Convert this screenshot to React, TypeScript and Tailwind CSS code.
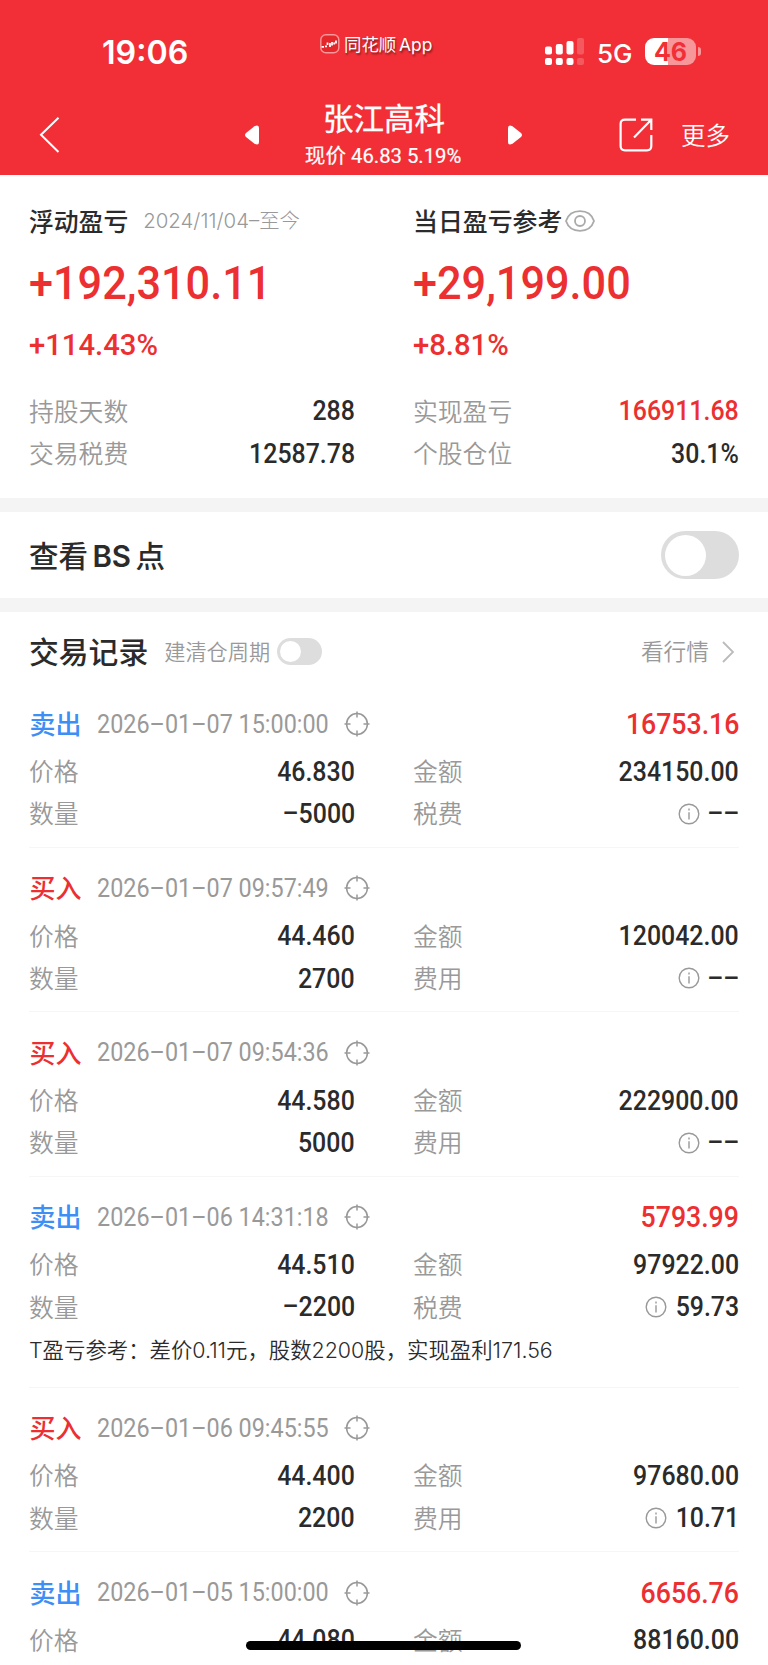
import { clsx } from "clsx";

interface TradeRecord {
    type: 'buy' | 'sell';
    time: string;
    profit?: string;
    price: string;
    amount: string;
    quantity?: string;
    fee?: string;
    note?: string;
}

const records: TradeRecord[] = [
    { type: 'sell', time: '2026–01–07 15:00:00', profit: '16753.16', price: '46.830', amount: '234150.00', quantity: '–5000', fee: '––' },
    { type: 'buy', time: '2026–01–07 09:57:49', price: '44.460', amount: '120042.00', quantity: '2700', fee: '––' },
    { type: 'buy', time: '2026–01–07 09:54:36', price: '44.580', amount: '222900.00', quantity: '5000', fee: '––' },
    {
        type: 'sell', time: '2026–01–06 14:31:18', profit: '5793.99', price: '44.510', amount: '97922.00', quantity: '–2200', fee: '59.73',
        note: 'T盈亏参考：差价0.11元，股数2200股，实现盈利171.56',
    },
    { type: 'buy', time: '2026–01–06 09:45:55', price: '44.400', amount: '97680.00', quantity: '2200', fee: '10.71' },
    { type: 'sell', time: '2026–01–05 15:00:00', profit: '6656.76', price: '44.080', amount: '88160.00' },
];

const InfoIcon = () => (
    <svg width="22" height="22" viewBox="0 0 22 22" fill="none" stroke="#999" strokeWidth="1.4">
        <circle cx="11" cy="11" r="9.8" />
        <path d="M11 9.2v7.2M11 5.6v1.8" />
    </svg>
);

const TargetIcon = () => (
    <svg width="26" height="26" viewBox="0 0 26 26" fill="none" stroke="#999" strokeWidth="1.5">
        <circle cx="13" cy="13" r="10.4" />
        <path d="M13 .5v6M13 19.5v6M.5 13h6M19.5 13h6" />
    </svg>
);

// Baris label di kiri dan nilai di kanan
const Row = ({ label, value, red, info }: { label: string; value: string; red?: boolean; info?: boolean }) => (
    <div className="flex h-[42.2px] items-center justify-between">
        <span className="pb-[2px] text-[24.8px] leading-none font-[350] text-[#999]">{label}</span>
        <span className="flex items-center">
            {info && <InfoIcon />}
            <span className={clsx(
                "origin-right scale-x-[0.905] font-[Roboto] text-[27.5px] leading-none font-medium",
                red ? 'text-[#ec2f31]' : 'text-[#2b2b2b]',
                info && (value === '––' ? 'ml-1' : 'ml-0.5')
            )}>
                {value}
            </span>
        </span>
    </div>
);

const Record = ({ item }: { item: TradeRecord }) => (
    <div className="border-b border-[#f6f6f6] pt-[14px] pb-[12px]">
        <div className="flex h-[53px] items-center">
            <span className={clsx("w-[67.5px] pb-[2px] pl-[0.5px] text-[26px] leading-none font-medium", item.type === 'sell' ? 'text-[#3d8ef5]' : 'text-[#ec2f31]')}>
                {item.type === 'sell' ? '卖出' : '买入'}
            </span>
            <span className="w-[247px] pt-[1px] whitespace-nowrap">
                <span className="inline-block origin-left scale-x-[0.935] font-[Roboto] text-[25px] leading-none text-[#999]">{item.time}</span>
            </span>
            <TargetIcon />
            {item.profit && (
                <span className="ml-auto origin-right scale-x-[0.92] pt-[1px] font-[Roboto] text-[29px] leading-none font-medium text-[#ec2f31]">{item.profit}</span>
            )}
        </div>
        <div className="grid grid-cols-2 gap-x-[58px]">
            <Row label="价格" value={item.price} />
            <Row label="金额" value={item.amount} />
            {item.quantity && <Row label="数量" value={item.quantity} />}
            {item.fee && <Row label={item.type === 'sell' ? '税费' : '费用'} value={item.fee} info />}
        </div>
        {item.note && (
            <div className="flex h-[46.6px] items-center pb-[1px] font-[Inter,'Noto_Sans_CJK_SC',sans-serif] text-[21.4px] leading-none font-[350] whitespace-nowrap text-[#2b2b2b]">
                {item.note}
            </div>
        )}
    </div>
);

const StatusBar = () => (
    <div className="flex h-[100px] items-center font-[Inter,'Noto_Sans_CJK_SC',sans-serif]">
        <span className="mt-[7px] ml-[102px] w-[218px] text-[32.2px] leading-none font-semibold">19:06</span>
        <div className="mb-[11px] flex w-[224px] items-center gap-1">
            <svg className="mb-[1px]" width="20" height="20" viewBox="0 0 20 20" fill="none">
                <rect x=".8" y=".8" width="18" height="18" rx="5" fill="#e5262b" stroke="#f9989b" strokeWidth="1.4" />
                <path d="M1.500 12.800h2.500M5 12.300h2M7.500 8.500v2.500M10 9v4M12 8v3.500M14.200 8.500v2M16 6.500v3" stroke="#fff" strokeWidth="1.800" />
            </svg>
            <span className="mt-[1px] text-[17.4px] leading-none [text-shadow:1px_2px_2px_rgba(0,0,0,0.45)] [word-spacing:-2px]">同花顺 App</span>
        </div>
        <svg className="mt-1" width="40" height="28" viewBox="0 0 40 28" fill="#fff">
            <rect x="1" y="8.500" width="7" height="8" rx="2" />
            <rect x="1" y="20" width="7" height="7" rx="2" />
            <rect x="11.800" y="6" width="7" height="10.500" rx="2" />
            <rect x="11.800" y="20" width="7" height="7" rx="2" />
            <rect x="22.500" y="3" width="7" height="13.500" rx="2" />
            <rect x="22.500" y="20" width="7" height="7" rx="2" />
            <g opacity=".2">
                <rect x="33" y="0" width="7" height="16.500" rx="2" />
                <rect x="33" y="20" width="7" height="7" rx="2" />
            </g>
        </svg>
        <span className="mt-[8px] ml-[13px] w-[48px] text-[26px] leading-none font-medium">5G</span>
        <div className="mt-[3px] flex h-[27px] w-[51px] items-center justify-center rounded-[9px] bg-linear-to-r from-white from-46% to-[#f8979a] to-46% pt-[1px] text-[25px] leading-none font-bold text-[#f22f37]">46</div>
        <div className="mt-[3px] ml-[1.5px] h-[9px] w-[3.5px] rounded-r-full bg-[#f8979a]" />
    </div>
);

const Header = () => (
    <header className="h-[174.5px] bg-[#f22f37] text-white">
        <StatusBar />
        <div className="flex h-[74px] items-center">
            <svg className="mb-[5px] ml-[39px]" width="22" height="36" viewBox="0 0 22 36" fill="none" stroke="#fff" strokeWidth="2">
                <path d="M19.500 .8 2 17.800 19.500 35" />
            </svg>
            <svg className="mb-[4px] ml-[183px]" width="16" height="20" viewBox="0 0 16 20" fill="#fff">
                <path d="M2 8 10.500 1.200Q15 -1 15 3V17Q15 21 10.500 18.800L2 12Q0 10 2 8Z" />
            </svg>
            <div className="flex w-[248px] flex-col items-center">
                <span className="mt-[-9px] text-[30.5px] leading-[40px] [-webkit-text-stroke:0.3px_#fff]">张江高科</span>
                <span className="mt-[2px] -mb-[2px] text-[20.7px] leading-[30px] whitespace-nowrap [-webkit-text-stroke:0.2px_#fff]">
                    现价 <span className="inline-block origin-left scale-x-[0.98] font-[Roboto]">46.83 5.19%</span>
                </span>
            </div>
            <svg className="mb-[4px]" width="16" height="20" viewBox="0 0 16 20" fill="#fff">
                <path d="M13 8 4.500 1.200Q0 -1 0 3V17Q0 21 4.500 18.800L13 12Q15 10 13 8Z" />
            </svg>
            <svg className="mb-[4px] ml-[95px]" width="34" height="34" viewBox="0 0 34 34" fill="none" stroke="#fff" strokeWidth="2.200">
                <path d="M17 1.600H6Q1.600 1.600 1.600 6V28Q1.600 32.300 6 32.300H28Q32.300 32.300 32.300 28V17" />
                <path d="M22 1.600H32.300V12M32 2 15 19.500" />
            </svg>
            <span className="mb-[3px] ml-[28px] text-[24.500px] leading-none font-[350]">更多</span>
        </div>
    </header>
);

const App: React.FC = () => {
    return (
        <div className="relative h-[1665px] w-[768px] overflow-hidden bg-white font-['Noto_Sans_CJK_SC',sans-serif]">
            <Header />

            <section className="grid h-[323.5px] grid-cols-2 content-start gap-x-[58px] px-[29px] pt-[21.5px] text-[#ec2f31]">
                <div>
                    <div className="flex h-[50px] items-center">
                        <span className="pb-[2px] text-[24.8px] leading-none font-medium text-[#2b2b2b]">浮动盈亏</span>
                        <span className="ml-[15px] font-[Inter,'Noto_Sans_CJK_SC',sans-serif] text-[20.400px] leading-none font-light whitespace-nowrap text-[#999]">2024/11/04–至今</span>
                    </div>
                    <div className="flex h-[74px] origin-left scale-x-[0.93] items-center font-[Roboto] text-[46.5px] leading-none font-medium">+192,310.11</div>
                    <div className="flex h-[50px] origin-left scale-x-[0.975] items-center pb-[1px] font-[Roboto] text-[30px] leading-none font-medium">+114.43%</div>
                    <div className="pt-[20px]">
                        <Row label="持股天数" value="288" />
                        <Row label="交易税费" value="12587.78" />
                    </div>
                </div>
                <div>
                    <div className="flex h-[50px] items-center">
                        <span className="pb-[2px] text-[24.9px] leading-none font-medium text-[#2b2b2b]">当日盈亏参考</span>
                        <svg className="ml-[3px]" width="30" height="22" viewBox="0 0 30 22" fill="none" stroke="#aaa" strokeWidth="1.8">
                            <path d="M1 11C3 5 8 1.200 15 1.200S27 5 29 11C27 17 22 20.800 15 20.800S3 17 1 11Z" />
                            <circle cx="15" cy="11" r="5" />
                        </svg>
                    </div>
                    <div className="flex h-[74px] origin-left scale-x-[0.93] items-center font-[Roboto] text-[46.5px] leading-none font-medium">+29,199.00</div>
                    <div className="flex h-[50px] origin-left scale-x-[0.975] items-center pb-[1px] font-[Roboto] text-[30px] leading-none font-medium">+8.81%</div>
                    <div className="pt-[20px]">
                        <Row label="实现盈亏" value="166911.68" red />
                        <Row label="个股仓位" value="30.1%" />
                    </div>
                </div>
            </section>

            <section className="flex h-[114px] items-center justify-between border-y-14 border-[#f4f4f4] px-[29px]">
                <span className="pt-[3px] font-[Inter,'Noto_Sans_CJK_SC',sans-serif] text-[29.5px] leading-none font-medium text-[#2b2b2b] [word-spacing:-3.5px]">查看 <span className="font-semibold">BS</span> 点</span>
                <div className="flex h-[48px] w-[78px] items-center rounded-full bg-[#ddd] pl-[3.5px]">
                    <div className="size-[41px] rounded-full bg-white" />
                </div>
            </section>

            <section className="px-[29px]">
                <div className="flex h-[71.6px] items-center pt-[8px]">
                    <span className="pb-[2px] text-[29.8px] leading-none font-medium text-[#2b2b2b]">交易记录</span>
                    <span className="ml-[16px] pb-[2px] text-[21.2px] leading-none font-[350] text-[#999]">建清仓周期</span>
                    <div className="ml-[7px] flex h-[27px] w-[45px] items-center rounded-full bg-[#ddd] pl-[3px]">
                        <div className="size-[21px] rounded-full bg-white" />
                    </div>
                    <span className="ml-auto pb-[1px] text-[22.7px] leading-none font-[350] text-[#999]">看行情</span>
                    <svg className="mr-[4px] ml-[12px]" width="14" height="22" viewBox="0 0 14 22" fill="none" stroke="#bbb" strokeWidth="1.800">
                        <path d="M2 1 12 11 2 21" />
                    </svg>
                </div>
                {records.map((item) => (
                    <Record key={item.time} item={item} />
                ))}
            </section>

            <div className="absolute bottom-[15px] left-[246px] h-[9px] w-[275px] rounded-full bg-black" />
        </div>
    );
};

export default App;
